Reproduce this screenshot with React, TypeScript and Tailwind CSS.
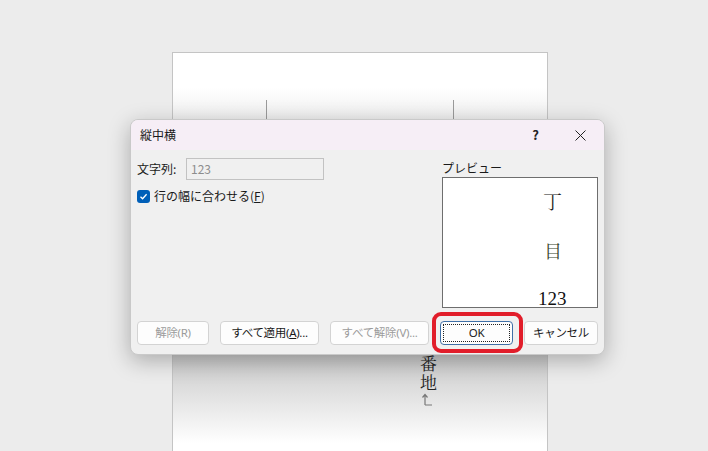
import React from "react";

const ui = { fontFamily: '"Noto Sans CJK JP", "Noto Sans", sans-serif' };
const btnFont = { fontFamily: '"Noto Sans", "Noto Sans CJK JP", sans-serif' };
const serif = { fontFamily: '"Noto Serif CJK JP", "Liberation Serif", "Noto Sans CJK JP", serif' };

function Btn({ children, disabled, w, focus }: { children: React.ReactNode; disabled?: boolean; w: string; focus?: boolean }) {
  return (
    <div
      style={btnFont}
      className={`${w} h-[24px] rounded-[4px] flex items-center justify-center text-[11.5px] tracking-[-0.3px] whitespace-nowrap ${
        focus ? "border border-[#3f6fa6] bg-[#fdfdfd] p-[2px]" : "border border-[#d3d3d3] bg-[#fdfdfd]"
      } ${disabled ? "text-[#9b9b9b]" : "text-[#1a1a1a]"}`}
    >
      {focus ? (
        <div className="w-full h-full border border-dotted border-[#222] flex items-center justify-center">{children}</div>
      ) : (
        children
      )}
    </div>
  );
}

export default function App() {
  return (
    <div className="relative w-[708px] h-[451px] bg-[#ececec] overflow-hidden" style={ui}>
      {/* document page */}
      <div className="absolute left-[172px] top-[52px] w-[376px] h-[400px] bg-white border border-[#c4c4c4]">
        <div className="absolute left-0 right-0 top-[35px] h-[35px] bg-gradient-to-b from-white to-[#ececec]" />
        <div className="absolute left-[93px] top-[47px] w-px h-[22px] bg-[#9a9a9a]" />
        <div className="absolute left-[280px] top-[47px] w-px h-[22px] bg-[#9a9a9a]" />
        <div className="absolute left-0 right-0 top-[300px] h-[90px] bg-gradient-to-b from-[#c8c8c8] to-white" />
        <div className="absolute left-[245px] top-[302px] flex flex-col items-center text-[#222]" style={serif}>
          <span className="[writing-mode:vertical-rl] text-[17px] leading-[20px] tracking-[2px]">番地</span>
          <svg width="12" height="14" viewBox="0 0 12 14">
            <path d="M3 12 V2 M0.5 4.5 L3 1.5 L5.5 4.5 M3 12 H10" stroke="#777" strokeWidth="1.2" fill="none" />
          </svg>
        </div>
      </div>

      {/* dialog */}
      <div className="absolute left-[130px] top-[119px] w-[475px] h-[236px] rounded-[8px] bg-[#f0f0f0] border border-[#c9c9c9] shadow-[0_6px_22px_rgba(0,0,0,0.28)] flex flex-col overflow-hidden">
        <div className="h-[30px] bg-[#f6eef6] flex items-center pl-[9px] shrink-0">
          <span className="text-[12px] text-[#1a1a1a]">縦中横</span>
          <span className="ml-auto text-[13px] font-bold text-[#222] mr-[36px]">?</span>
          <svg width="11" height="11" viewBox="0 0 11 11" className="mr-[18px]">
            <path d="M0.5 0.5 L10.5 10.5 M10.5 0.5 L0.5 10.5" stroke="#222" strokeWidth="1" />
          </svg>
        </div>
        <div className="flex-1 flex flex-col px-[6px] pb-[9px]">
          <div className="flex flex-1">
            <div className="flex-1 flex flex-col pt-[8px]">
              <div className="flex items-center h-[22px]">
                <span className="text-[12px] text-[#1a1a1a] w-[49px]">文字列:</span>
                <div className="w-[138px] h-[22px] border border-[#c2c2c2] bg-[#f0f0f0] flex items-center px-[4px] text-[12px] text-[#8d8d8d]">
                  123
                </div>
              </div>
              <div className="flex items-center mt-[8px] h-[16px]">
                <div className="w-[13px] h-[13px] rounded-[3px] bg-[#005fb8] flex items-center justify-center">
                  <svg width="9" height="9" viewBox="0 0 9 9">
                    <path d="M1.5 4.8 L3.6 6.8 L7.6 2.2" stroke="white" strokeWidth="1.3" fill="none" />
                  </svg>
                </div>
                <span className="ml-[4px] text-[12px] text-[#1a1a1a]">
                  行の幅に合わせる(<span className="underline">F</span>)
                </span>
              </div>
            </div>
            <div className="w-[156px] flex flex-col pt-[8px]">
              <span className="text-[12px] leading-[19px] h-[19px] text-[#1a1a1a]">プレビュー</span>
              <div className="h-[131px] bg-white border border-[#6e6e6e] relative" style={serif}>
                <div className="absolute left-[100px] top-[12px] text-[19px] leading-[22px] text-[#222]">丁</div>
                <div className="absolute left-[101px] top-[61px] text-[18px] leading-[22px] text-[#3b4630]">目</div>
                <div className="absolute left-[95px] top-[110px] text-[19px] leading-[22px] text-[#111]" style={{ fontFamily: '"Liberation Serif", serif' }}>
                  123
                </div>
              </div>
            </div>
          </div>
          <div className="flex gap-[11px] mt-[13px]">
            <Btn w="w-[72px]" disabled>解除(R)</Btn>
            <Btn w="w-[99px]">
              <span>すべて適用(<span className="underline">A</span>)...</span>
            </Btn>
            <Btn w="w-[99px]" disabled>すべて解除(V)...</Btn>
            <Btn w="w-[73px]" focus>OK</Btn>
            <Btn w="w-[74px]">キャンセル</Btn>
          </div>
        </div>
      </div>

      {/* red highlight */}
      <div className="absolute left-[432px] top-[312px] w-[91px] h-[41px] rounded-[9px] border-[4px] border-[#e11d2a]" />
    </div>
  );
}
